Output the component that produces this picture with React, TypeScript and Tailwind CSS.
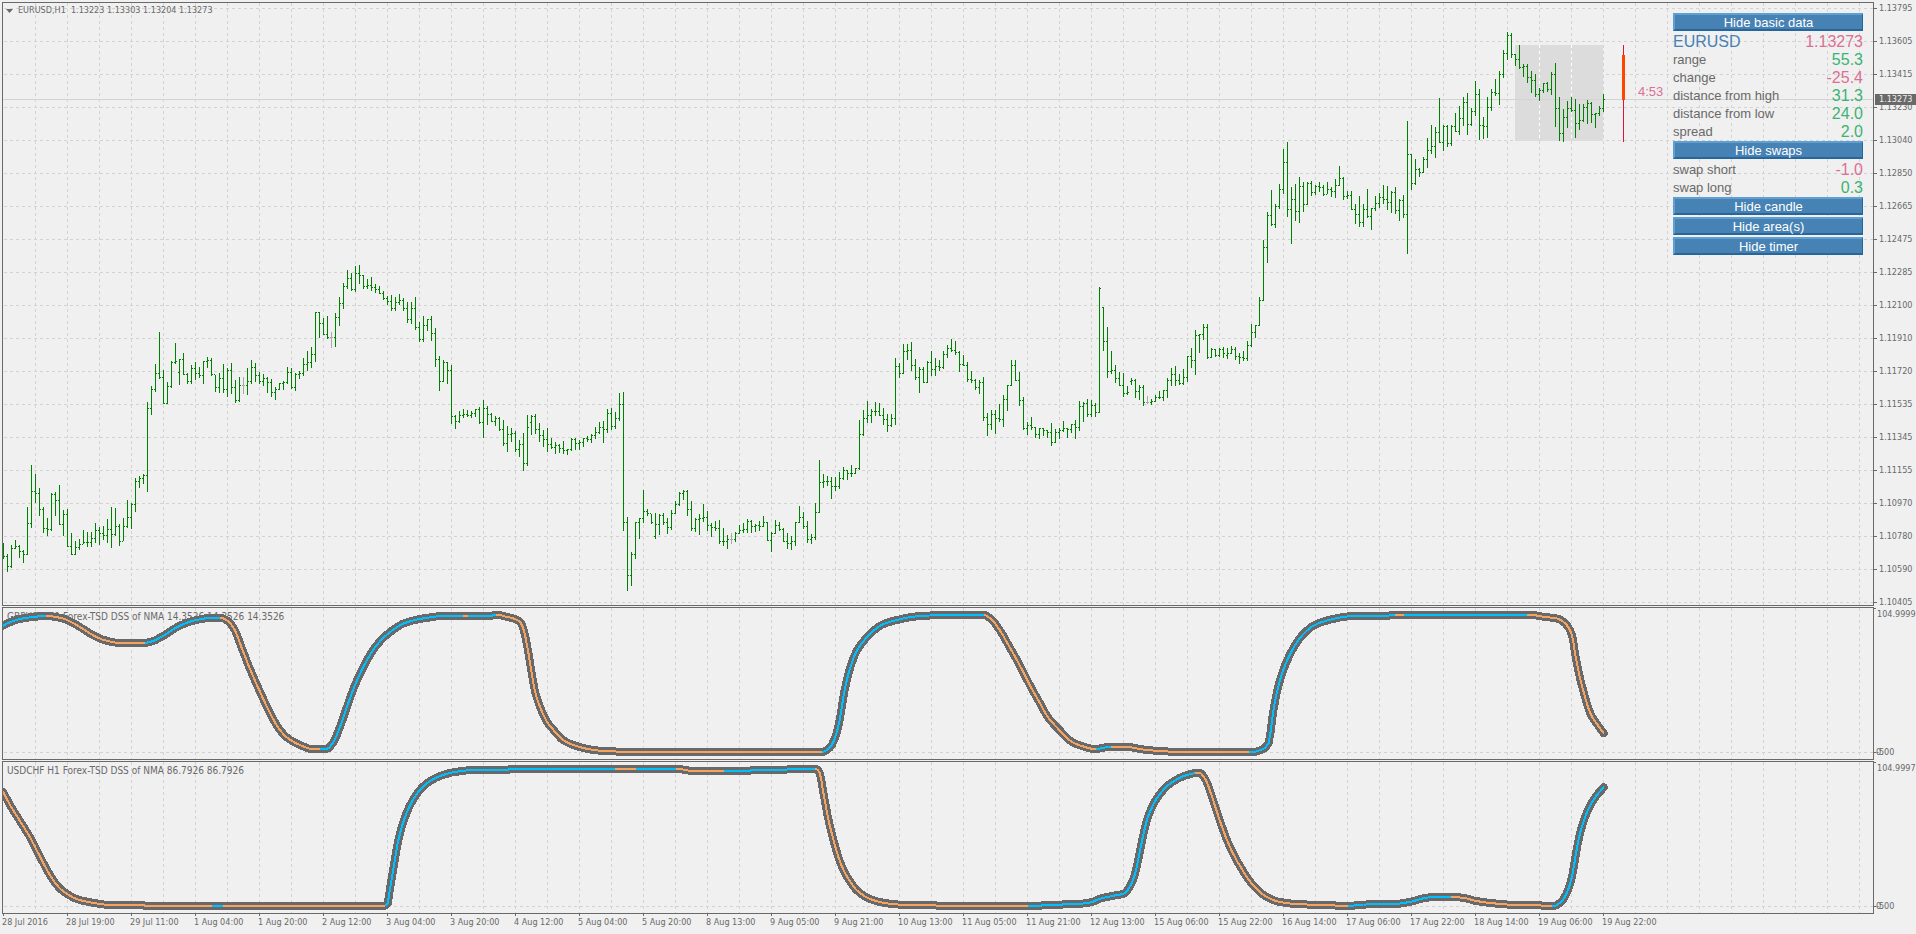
import React from "react";

type Point = [number, number];

const BAR_STEP = 4;
const FLAT_BARS = new Set([60, 82, 182, 286]);

// Opening levels for bars that gap away from the previous close.
const GAP_OPENS: Record<number, number> = { 44: 517, 132: 667, 163: 1009, 275: 322, 282: 544, 306: 466 };

// high, low and close of each hourly bar, in thirds of a pixel
const LOWER_BARS =
  "1030 1077 1069,1062 1116 1099,1035 1104 1045,1020 1047 1039,1035 1074 1054,1050 1089 1063,921 1065 970,795 984 874,822 909 880,864 948 928," +
  "921 999 985,954 1008 988,879 993 883,876 948 901,855 975 973,930 1008 943,927 1041 1039,999 1065 1063,1023 1065 1042,1017 1050 1033," +
  "990 1032 1027,996 1041 1027,996 1041 1015,969 1029 991,981 1035 1000,978 1020 1006,957 1029 988,921 1044 1003,924 1008 979,972 1038 1024," +
  "954 1023 979,900 984 952,909 987 913,834 936 844,828 864 835,822 852 826,606 876 625,558 645 568,492 576 520,396 537 532," +
  "510 612 610,546 612 559,483 564 487,429 492 484,477 555 478,459 525 523,519 552 544,495 552 505,486 540 520,501 534 526," +
  "483 552 484,471 504 481,474 528 523,525 576 562,519 579 535,492 579 568,504 591 511,489 582 562,540 609 601,531 606 556," +
  "531 582 556,504 585 544,480 552 502,489 546 526,516 552 544,522 558 535,531 579 547,537 591 577,561 600 568,549 570 550," +
  "543 570 547,501 552 517,504 567 562,519 573 523,513 537 520,474 528 493,453 513 487,441 504 463,336 486 337,336 414 370," +
  "354 405 403,348 417 412,396 444 412,339 441 352,291 378 310,249 327 259,210 267 235,219 273 268,198 276 220,195 252 226," +
  "225 267 259,237 267 256,231 273 262,252 279 268,258 282 280,273 300 295,288 315 304,285 333 325,291 333 307,282 315 301," +
  "294 333 325,306 369 358,306 372 325,291 390 382,366 426 418,348 426 376,357 393 358,348 423 400,384 501 478,468 573 544," +
  "480 546 487,486 552 511,495 672 649,645 687 664,633 669 646,627 654 643,630 651 646,633 654 640,627 651 628,621 672 667," +
  "600 714 625,618 675 643,639 666 664,648 678 655,651 693 688,660 738 730,678 756 703,684 726 700,693 756 748,720 771 733," +
  "699 813 790,645 798 682,645 705 649,642 702 688,669 726 706,690 741 718,684 756 733,714 747 742,726 762 736,732 759 745," +
  "723 762 751,747 765 748,714 753 718,714 750 730,720 750 727,714 741 715,708 726 718,702 729 706,681 717 697,666 702 682," +
  "663 729 688,627 699 640,624 690 679,636 687 655,579 663 613,576 993 967,951 1173 1126,1056 1158 1063,966 1077 967,954 1017 955," +
  "870 969 934,927 948 940,942 972 967,939 1017 973,942 1005 946,939 975 967,954 1002 982,930 990 940,903 942 913,876 918 880," +
  "870 900 874,870 948 928,903 993 985,954 996 958,942 1005 955,912 966 952,933 993 976,969 1011 982,963 993 985,960 1032 1024," +
  "984 1038 1024,1005 1047 1018,999 1032 1018,996 1026 1000,975 1002 991,969 999 988,957 999 964,960 999 979,972 996 976,963 993 979," +
  "948 981 967,966 1023 1021,996 1056 1000,960 1002 976,966 993 988,984 1026 1024,999 1047 1030,1008 1050 1024,966 1038 967,918 969 952," +
  "936 987 979,963 1029 1018,1002 1032 1012,909 1020 937,780 939 847,822 864 844,828 858 844,831 897 859,831 873 859,816 867 835," +
  "801 840 811,810 840 820,795 831 820,804 822 805,660 810 703,630 708 655,603 669 646,627 669 634,606 648 634,609 648 646," +
  "624 675 658,642 696 676,642 681 655,474 675 499,489 534 520,432 522 454,432 480 451,426 513 496,477 540 532,501 579 508," +
  "501 549 547,483 549 487,453 528 508,474 528 499,480 513 502,453 507 463,435 474 445,417 456 451,423 465 457,453 516 493," +
  "465 498 496,486 546 538,513 549 541,537 570 562,540 582 547,531 663 652,639 708 673,630 690 643,630 702 655,612 666 658," +
  "585 681 598,555 633 556,480 558 496,480 543 541,516 618 601,591 690 685,666 705 676,651 690 682,681 714 703,684 717 685," +
  "684 708 691,690 714 697,669 738 727,687 729 697,684 717 691,663 696 685,684 714 688,672 699 673,660 717 682,603 693 619," +
  "606 666 610,597 651 643,600 651 616,609 651 637,261 639 265,321 453 424,381 534 514,453 522 511,495 549 535,516 558 556," +
  "519 591 580,558 585 577,534 555 541,537 594 574,555 600 562,555 618 607,588 612 607,597 615 604,585 606 592,573 597 592," +
  "570 603 571,534 594 541,504 558 523,498 558 541,522 555 550,507 555 532,468 546 469,444 504 481,390 525 406,402 459 403," +
  "372 420 382,372 477 472,444 474 448,447 471 466,444 471 448,441 474 460,444 477 460,438 462 448,441 480 469,459 492 472," +
  "453 483 475,423 483 436,372 441 397,375 414 376";

const UPPER_BARS =
  "891 978 901,720 903 742,636 789 646,570 678 673,612 684 619,552 627 568,447 582 487,426 651 628,561 732 598,552 663 634," +
  "531 669 559,546 636 613,546 615 550,543 588 577,555 585 559,546 576 562,555 588 583,546 582 568,561 591 574,537 594 556," +
  "498 558 535,531 600 589,573 597 586,573 630 628,612 672 643,588 681 667,612 681 628,567 654 649,624 690 625,588 633 610," +
  "579 624 592,555 612 598,558 630 607,573 639 577,561 642 631,597 663 601,585 654 643,363 762 463,462 570 550,477 555 508," +
  "504 531 517,471 519 478,414 504 451,375 462 439,381 474 397,294 429 427,375 453 379,375 441 430,375 438 379,339 396 394," +
  "318 405 355,291 378 307,279 405 373,324 378 334,243 348 283,267 420 376,351 417 379,291 414 322,267 333 277,237 288 280," +
  "213 315 223,150 234 160,96 180 106,99 174 163,162 198 178,135 207 202,192 231 199,192 249 232,213 279 241,222 291 283," +
  "264 303 271,249 279 250,246 276 268,216 285 223,189 381 325,291 423 400,327 426 352,303 384 325,291 336 331,297 414 370," +
  "312 390 361,312 366 322,300 372 310,306 369 343,339 384 340,318 348 325,282 336 298";

const parse = (text: string, base: number) =>
  text.split(",").map((row) => row.split(" ").map((v) => Math.floor(Number(v) / 3) + base));

const BARS = [...parse(LOWER_BARS, 197), ...parse(UPPER_BARS, -3)];

function barPath(gray: boolean) {
  let d = "";
  BARS.forEach(([high, low, close], i) => {
    if (FLAT_BARS.has(i) !== gray) return;
    const x = i * BAR_STEP;
    d += `M${x} ${high}h1V${low}h-1zM${x + 1} ${close}h1v1h-1z`;
    if (i > 0) {
      const open = i in GAP_OPENS ? Math.floor(GAP_OPENS[i] / 3) + 197 : BARS[i - 1][2];
      d += `M${x - 1} ${open}h1v1h-1z`;
    }
  });
  return d;
}

const GBP_LINE: Point[] = [
  [0, 17.7], [6, 14.7], [17, 11], [30, 9], [43, 8], [58, 10], [64, 12], [79, 20.3], [91, 27.7], [101, 32], [115, 34.7],
  [142, 34.7], [148, 33.7], [160, 28], [172, 20.3], [185, 14.3], [197, 11.3], [209, 9.7], [217, 9.7], [225.5, 13.5],
  [232, 22.5], [238, 38], [247, 61], [258, 86], [268.5, 108], [276.5, 121.5], [285, 130.3], [297, 137], [309, 141],
  [323.5, 141], [329.7, 135.3], [335.8, 122], [344, 98.7], [352, 77], [362.3, 55.3], [372.5, 38.7], [382.7, 27.7],
  [391, 21.3], [401, 15.3], [415.4, 11.3], [429.7, 9], [442, 7.7], [489, 7.7], [493, 6.5], [503, 8.7], [512, 11],
  [517.4, 14.3], [520.7, 22], [524.3, 38.7], [527.6, 58.7], [531.7, 82], [537.8, 101], [544, 113.7], [552, 123.7],
  [560, 132], [570.5, 137], [584.8, 141], [601, 143], [637, 144], [819, 144], [826.8, 139.7], [833, 127], [837, 110.3],
  [841, 85.3], [847, 60.3], [853.3, 43.7], [859.4, 34.7], [867.6, 25.3], [880, 16.3], [894, 12], [910.5, 8.7],
  [922.7, 7.7], [953, 6.7], [980, 6.7], [988, 11], [996, 21], [1006.4, 38.7], [1016.6, 57], [1026.8, 77], [1037, 95.3],
  [1045, 109.3], [1057.4, 123], [1067.6, 133], [1077.8, 137.7], [1092, 141], [1108.4, 138.7], [1122.7, 138.7],
  [1137, 141], [1147, 142.3], [1180, 144], [1249, 144], [1259.4, 141.3], [1265.6, 135.3], [1269.7, 107], [1273.7, 85],
  [1280.3, 62], [1289.3, 42], [1299.5, 27], [1311.8, 17], [1326, 12], [1340.3, 9], [1354.6, 7.7], [1385, 7.7],
  [1391, 6.7], [1526, 6.7], [1540.3, 8.7], [1554.6, 10.7], [1562, 15.3], [1569, 27], [1572, 45.3], [1575.9, 65.3],
  [1581, 85.3], [1587.3, 105.3], [1593.4, 115.3], [1600.8, 125.3],
];
const GBP_TURNS = [0, 43, 142, 217, 317, 460, 465, 493, 819, 981, 1093, 1108, 1246, 1392, 1401, 1524, 1601];

const CHF_LINE: Point[] = [
  [0, 29.7], [7, 43], [17.4, 59.7], [27.6, 76.3], [37.8, 96.3], [48, 114.7], [56.2, 125.7], [64.3, 132], [74.5, 137.3],
  [93, 141.3], [105, 142.7], [140, 142.7], [142, 144], [380.7, 144], [384.8, 141.3], [386.8, 128], [391, 103],
  [395, 79.7], [401, 58], [407.2, 43], [417.4, 27.3], [427.6, 18.7], [440, 13], [452, 10], [472.5, 8], [505, 8],
  [507, 6.7], [673.7, 6.7], [688, 8.7], [747, 8.7], [749, 8], [784, 7.5], [788, 6.7], [812.5, 6.7], [816.6, 10.7],
  [819.9, 28], [824.8, 54.7], [830.9, 79.7], [837, 99.7], [845, 116.3], [855.4, 129.7], [869.7, 138], [884, 141.3],
  [900, 142.7], [931, 142.7], [935, 144], [1037, 144], [1041, 142.7], [1069.7, 142.3], [1088, 140.3], [1096.2, 137],
  [1110.5, 133.7], [1120.7, 131.7], [1126.8, 124.7], [1131.7, 113], [1135.8, 94.7], [1139.9, 74.7], [1145, 54.7],
  [1155.4, 34], [1167.6, 21.3], [1182, 13.7], [1196.2, 10.7], [1202.3, 17], [1208.4, 33], [1216.6, 58], [1226.8, 84.7],
  [1239, 107.3], [1249.2, 122], [1263.5, 134.7], [1277, 140], [1297.5, 142.3], [1330, 143], [1334, 144], [1350.6, 143.7],
  [1354.6, 142.7], [1391.4, 142], [1407.7, 139.7], [1422, 136], [1434, 134.7], [1448.5, 134.7], [1462.8, 136.3],
  [1473, 139], [1497.5, 142], [1507.7, 142.7], [1536, 143], [1540, 144], [1550.6, 144], [1558.7, 139.3],
  [1563.6, 131.3], [1569, 114.7], [1573, 91.3], [1577, 71.3], [1585, 48], [1592.6, 34.7], [1600.8, 25.3],
];
const CHF_TURNS = [0, 209, 220, 382, 612, 633, 673, 721, 812, 1025, 1192, 1345, 1448, 1549, 1601];

const PRICES = [
  "1.13795", "1.13605", "1.13415", "1.13230", "1.13040", "1.12850", "1.12665", "1.12475", "1.12285", "1.12100",
  "1.11910", "1.11720", "1.11535", "1.11345", "1.11155", "1.10970", "1.10780", "1.10590", "1.10405",
];

const TIMES = [
  "28 Jul 2016", "28 Jul 19:00", "29 Jul 11:00", "1 Aug 04:00", "1 Aug 20:00", "2 Aug 12:00", "3 Aug 04:00",
  "3 Aug 20:00", "4 Aug 12:00", "5 Aug 04:00", "5 Aug 20:00", "8 Aug 13:00", "9 Aug 05:00", "9 Aug 21:00",
  "10 Aug 13:00", "11 Aug 05:00", "11 Aug 21:00", "12 Aug 13:00", "15 Aug 06:00", "15 Aug 22:00", "16 Aug 14:00",
  "17 Aug 06:00", "17 Aug 22:00", "18 Aug 14:00", "19 Aug 06:00", "19 Aug 22:00",
];

// Monotone cubic interpolation, sampled every two pixels.
function smooth(points: Point[]): Point[] {
  const n = points.length;
  const slopes = points.slice(1).map((p, i) => (p[1] - points[i][1]) / (p[0] - points[i][0]));
  const tangents = points.map((_, i) => {
    if (i === 0) return slopes[0];
    if (i === n - 1) return slopes[n - 2];
    const a = slopes[i - 1];
    const b = slopes[i];
    return a * b <= 0 ? 0 : (2 * a * b) / (a + b);
  });
  const result: Point[] = [];
  for (let i = 0; i < n - 1; i++) {
    const [x0, y0] = points[i];
    const [x1, y1] = points[i + 1];
    const h = x1 - x0;
    const steps = Math.max(1, Math.round(h / 2));
    for (let s = 0; s < steps; s++) {
      const t = s / steps;
      const t2 = t * t;
      const t3 = t2 * t;
      const y =
        (2 * t3 - 3 * t2 + 1) * y0 +
        (t3 - 2 * t2 + t) * h * tangents[i] +
        (3 * t2 - 2 * t3) * y1 +
        (t3 - t2) * h * tangents[i + 1];
      result.push([Math.round((x0 + t * h) * 10) / 10, Math.round(y * 10) / 10]);
    }
  }
  result.push(points[n - 1]);
  return result;
}

function heightAt(points: Point[], x: number) {
  const i = points.findIndex((p) => p[0] >= x);
  if (i <= 0) return points[i === 0 ? 0 : points.length - 1][1];
  const [x0, y0] = points[i - 1];
  const [x1, y1] = points[i];
  return y0 + ((y1 - y0) * (x - x0)) / (x1 - x0);
}

function slice(points: Point[], from: number, to: number): Point[] {
  return [[from, heightAt(points, from)], ...points.filter((p) => p[0] > from && p[0] < to), [to, heightAt(points, to)]];
}

function Grid({ id, rows }: { id: string; rows: number[] }) {
  return (
    <svg className="absolute inset-0 h-full w-full" shapeRendering="crispEdges" aria-hidden="true">
      <defs>
        <pattern id={`${id}-cols`} width="32" height="6" patternUnits="userSpaceOnUse">
          <rect width="1" height="3" fill="#d3d3d3" />
        </pattern>
        <pattern id={`${id}-row`} width="6" height="1" patternUnits="userSpaceOnUse">
          <rect x="1" width="3" height="1" fill="#d3d3d3" />
        </pattern>
      </defs>
      <rect x="1" width="100%" height="100%" fill={`url(#${id}-cols)`} />
      {rows.map((y) => (
        <rect key={y} y={y} width="100%" height="1" fill={`url(#${id}-row)`} />
      ))}
    </svg>
  );
}

function PriceChart() {
  return (
    <svg className="absolute inset-0 h-full w-full" shapeRendering="crispEdges" role="img" aria-label="EURUSD hourly bars">
      <rect x="1512" y="42" width="88" height="96" fill="#dcdcdc" />
      <path d="M1536.5 42V138M1568.5 42V138" stroke="#fff" strokeDasharray="3 3" />
      <rect y="96" width="100%" height="1" fill="#d3d3d3" />
      <path d={barPath(false)} fill="#008000" />
      <path d={barPath(true)} fill="#a9a9a9" />
      <rect x="1620" y="42" width="1" height="97" fill="#dc143c" />
      <rect x="1619" y="52" width="3" height="45" fill="#ff4500" />
    </svg>
  );
}

function Oscillator({
  id, title, points, turns, startsUp, top,
}: {
  id: string; title: string; points: Point[]; turns: number[]; startsUp: boolean; top: string;
}) {
  const text = (list: Point[]) => list.map((p) => p.join(",")).join(" ");
  const line = smooth(points);
  return (
    <section className="flex h-[153px]">
      <div className="relative min-w-0 flex-1 overflow-hidden border border-[#696969]">
        <Grid id={id} rows={[144]} />
        <h2 className="absolute top-[3px] left-1 text-[10px] leading-[12px] whitespace-pre">{title}</h2>
        <svg className="absolute inset-0 h-full w-full" shapeRendering="crispEdges" fill="none" role="img" aria-label={title}>
          <polyline points={text(line)} stroke="#696969" strokeWidth="8" strokeLinejoin="round" strokeLinecap="round" />
          {turns.slice(1).map((to, i) => (
            <polyline
              key={to}
              points={text(slice(line, turns[i], to))}
              stroke={(i % 2 === 0) === startsUp ? "#00bfff" : "#f4a460"}
              strokeWidth="2"
              strokeLinejoin="round"
            />
          ))}
        </svg>
      </div>
      <div className="flex w-[42px] flex-col justify-between pt-px pb-[2px] leading-[11px]">
        <div className="flex">
          <span className="h-px w-[2px] bg-[#696969]" />
          <span className="mt-px ml-px">{top}</span>
        </div>
        <div className="flex items-center">
          <span className="h-px w-[2px] bg-[#696969]" />
          <span className="relative">
            -500
            <span className="absolute left-0">0</span>
          </span>
        </div>
      </div>
    </section>
  );
}

function PanelButton({ children }: { children: React.ReactNode }) {
  return (
    <button
      type="button"
      className="block h-[18px] w-full border-t-2 border-r border-b-2 border-l-2 border-t-[#5f9fd3] border-r-[#28659a] border-b-[#28659a] border-l-[#5f9fd3] bg-[#4682b4] pt-px text-center text-[13px] leading-[14px] text-white"
    >
      {children}
    </button>
  );
}

function Row({ label, value, up, heading }: { label: string; value: string; up: boolean; heading?: boolean }) {
  return (
    <div className="flex h-[18px] items-center justify-between leading-[18px]">
      <dt className={heading ? "text-[16px] text-[#4682b4]" : "text-[13px]"}>{label}</dt>
      <dd className={up ? "text-[16px] text-[#3cb371]" : "text-[16px] text-[#db7093]"}>{value}</dd>
    </div>
  );
}

function InfoPanel() {
  return (
    <aside className="absolute top-[10px] right-[10px] w-[190px] font-['Liberation_Sans',Arial,sans-serif]">
      <PanelButton>Hide basic data</PanelButton>
      <dl className="pt-[2px]">
        <Row heading label="EURUSD" value="1.13273" up={false} />
        <Row label="range" value="55.3" up />
        <Row label="change" value="-25.4" up={false} />
        <Row label="distance from high" value="31.3" up />
        <Row label="distance from low" value="24.0" up />
        <Row label="spread" value="2.0" up />
      </dl>
      <PanelButton>Hide swaps</PanelButton>
      <dl className="pt-[2px]">
        <Row label="swap short" value="-1.0" up={false} />
        <Row label="swap long" value="0.3" up />
      </dl>
      <div className="flex flex-col gap-[2px]">
        <PanelButton>Hide candle</PanelButton>
        <PanelButton>Hide area(s)</PanelButton>
        <PanelButton>Hide timer</PanelButton>
      </div>
    </aside>
  );
}

export default function App() {
  return (
    <main className="flex min-h-screen flex-col gap-px overflow-hidden bg-[#f0f0f0] pt-[2px] pl-[2px] font-['DejaVu_Sans_Condensed','DejaVu_Sans',sans-serif] text-[9px] text-[#696969]">
      <section className="flex">
        <div className="relative min-w-0 flex-1 overflow-hidden border border-[#696969]">
          <Grid id="price" rows={PRICES.map((_, i) => 5 + 33 * i)} />
          <PriceChart />
          <h1 className="absolute top-[2px] left-[3px] flex items-center gap-[5px] leading-[11px] whitespace-pre">
            <svg width="7" height="4" viewBox="0 0 7 4" fill="#696969" aria-hidden="true">
              <path d="M0 0h7L3.5 4z" />
            </svg>
            {"EURUSD,H1  1.13223 1.13303 1.13204 1.13273"}
          </h1>
          <span className="absolute top-[81px] left-[1635px] font-['Liberation_Sans',Arial,sans-serif] text-[13px] leading-4 text-[#db7093]">
            4:53
          </span>
          <InfoPanel />
        </div>
        <div className="relative w-[42px] pt-px">
          {PRICES.map((price) => (
            <div key={price} className="flex h-[33px] leading-[11px] last-of-type:h-[9px]">
              <span className="mt-[5px] h-px w-[3px] bg-[#696969]" />
              <span className="ml-[2px]">{price}</span>
            </div>
          ))}
          <span className="absolute top-[92px] right-0 left-px bg-[#696969] pl-1 leading-[11px] text-[#f0f0f0]">1.13273</span>
        </div>
      </section>

      <Oscillator
        id="gbp"
        title="GBPUSD H1 Forex-TSD DSS of NMA 14.3526 14.3526 14.3526"
        points={GBP_LINE}
        turns={GBP_TURNS}
        startsUp
        top="104.9999"
      />
      <Oscillator
        id="chf"
        title="USDCHF H1 Forex-TSD DSS of NMA 86.7926 86.7926"
        points={CHF_LINE}
        turns={CHF_TURNS}
        startsUp={false}
        top="104.9997"
      />

      <footer className="-mt-px flex h-5 overflow-hidden">
        {TIMES.map((time) => (
          <div key={time} className="w-16 shrink-0 whitespace-nowrap">
            <span className="ml-px block h-[2px] w-px bg-[#696969]" />
            <span className="block pt-px leading-[11px]">{time}</span>
          </div>
        ))}
      </footer>
    </main>
  );
}
